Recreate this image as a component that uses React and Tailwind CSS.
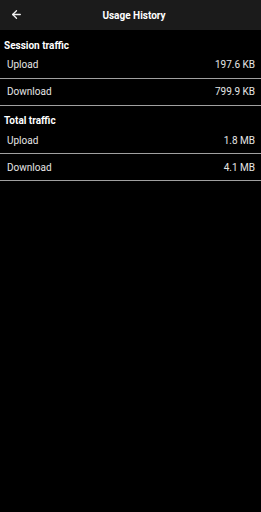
import { ArrowLeft } from 'lucide-react';

const sections = [
  {
    title: 'Session traffic',
    rows: [
      { label: 'Upload', value: '197.6 KB' },
      { label: 'Download', value: '799.9 KB' },
    ],
  },
  {
    title: 'Total traffic',
    rows: [
      { label: 'Upload', value: '1.8 MB' },
      { label: 'Download', value: '4.1 MB' },
    ],
  },
];

function Row({ label, value }) {
  return (
    <div className="border-b-[1.5px] border-[#a0a0a0]">
      <div className="flex h-[26px] items-center justify-between pl-[7px] pr-[6px] text-[10px] text-[#e6e6e6]">
        <span>{label}</span>
        <span>{value}</span>
      </div>
    </div>
  );
}

export default function App() {
  return (
    <div
      className="h-[512px] w-[261px] bg-black text-white"
      style={{ fontFamily: 'Roboto, "Noto Sans", sans-serif' }}
    >
      <header className="relative flex h-[30px] items-center justify-center bg-[#1b1b1b]">
        <button type="button" aria-label="Back" className="absolute left-[10px] top-[8px] text-[#f2f2f2]">
          <ArrowLeft size={13} strokeWidth={2.4} />
        </button>
        <h1 className="pl-[7px] text-[10px] font-bold">Usage History</h1>
      </header>

      {sections.map((s) => (
        <section key={s.title}>
          <div className="pl-[4px] pt-[9.5px] text-[10px] leading-[12px] font-bold">{s.title}</div>
          {s.rows.map((r) => (
            <Row key={r.label} {...r} />
          ))}
        </section>
      ))}
    </div>
  );
}
